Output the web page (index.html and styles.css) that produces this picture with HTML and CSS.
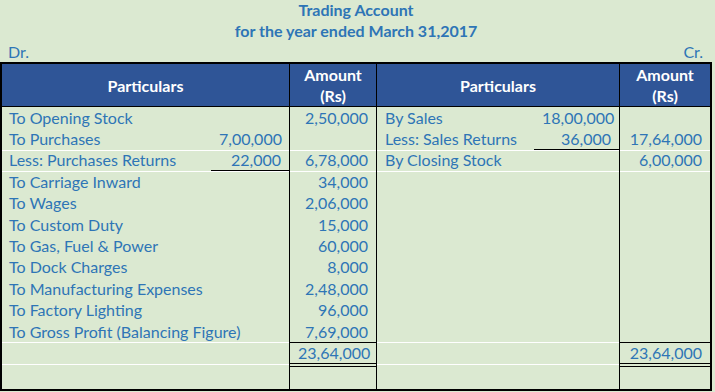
FILE: index.html
```html
<!DOCTYPE html>
<html lang="en">
<head>
<meta charset="utf-8">
<title>Trading Account</title>
<link rel="stylesheet" href="styles.css">
</head>
<body>
<div class="sheet">
  <div class="title">Trading Account</div>
  <div class="title">for the year ended March 31,2017</div>
  <div class="side-labels"><span>Dr.</span><span>Cr.</span></div>
  <table class="ledger">
    <colgroup>
      <col class="w-part">
      <col class="w-sub">
      <col class="w-amt">
      <col class="w-part2">
      <col class="w-sub2">
      <col class="w-amt2">
    </colgroup>
    <thead>
      <tr>
        <th colspan="2" class="vline">Particulars</th>
        <th class="vline">Amount<br>(Rs)</th>
        <th colspan="2" class="vline">Particulars</th>
        <th>Amount<br>(Rs)</th>
      </tr>
    </thead>
    <tbody>
      <tr>
        <td class="part">To Opening Stock</td>
        <td class="num vline"></td>
        <td class="num vline">2,50,000</td>
        <td class="part">By Sales</td>
        <td class="num vline">18,00,000</td>
        <td class="num"></td>
      </tr>
      <tr>
        <td class="part">To Purchases</td>
        <td class="num vline">7,00,000</td>
        <td class="num vline"></td>
        <td class="part">Less: Sales Returns</td>
        <td class="num vline under">36,000</td>
        <td class="num">17,64,000</td>
      </tr>
      <tr class="grid-top">
        <td class="part">Less: Purchases Returns</td>
        <td class="num vline under">22,000</td>
        <td class="num vline">6,78,000</td>
        <td class="part">By Closing Stock</td>
        <td class="num vline"></td>
        <td class="num">6,00,000</td>
      </tr>
      <tr class="grid-top">
        <td class="part">To Carriage Inward</td>
        <td class="num vline"></td>
        <td class="num vline">34,000</td>
        <td class="part"></td>
        <td class="num vline"></td>
        <td class="num"></td>
      </tr>
      <tr>
        <td class="part">To Wages</td>
        <td class="num vline"></td>
        <td class="num vline">2,06,000</td>
        <td class="part"></td>
        <td class="num vline"></td>
        <td class="num"></td>
      </tr>
      <tr>
        <td class="part">To Custom Duty</td>
        <td class="num vline"></td>
        <td class="num vline">15,000</td>
        <td class="part"></td>
        <td class="num vline"></td>
        <td class="num"></td>
      </tr>
      <tr>
        <td class="part">To Gas, Fuel &amp; Power</td>
        <td class="num vline"></td>
        <td class="num vline">60,000</td>
        <td class="part"></td>
        <td class="num vline"></td>
        <td class="num"></td>
      </tr>
      <tr>
        <td class="part">To Dock Charges</td>
        <td class="num vline"></td>
        <td class="num vline">8,000</td>
        <td class="part"></td>
        <td class="num vline"></td>
        <td class="num"></td>
      </tr>
      <tr>
        <td class="part">To Manufacturing Expenses</td>
        <td class="num vline"></td>
        <td class="num vline">2,48,000</td>
        <td class="part"></td>
        <td class="num vline"></td>
        <td class="num"></td>
      </tr>
      <tr>
        <td class="part">To Factory Lighting</td>
        <td class="num vline"></td>
        <td class="num vline">96,000</td>
        <td class="part"></td>
        <td class="num vline"></td>
        <td class="num"></td>
      </tr>
      <tr>
        <td class="part">To Gross Profit (Balancing Figure)</td>
        <td class="num vline"></td>
        <td class="num vline">7,69,000</td>
        <td class="part"></td>
        <td class="num vline"></td>
        <td class="num"></td>
      </tr>
      <tr class="grid-top total">
        <td class="part"></td>
        <td class="num vline"></td>
        <td class="num vline sum">23,64,000</td>
        <td class="part"></td>
        <td class="num vline"></td>
        <td class="num sum">23,64,000</td>
      </tr>
      <tr class="grid-top last">
        <td class="part"></td>
        <td class="num vline"></td>
        <td class="num vline sum-end"></td>
        <td class="part"></td>
        <td class="num vline"></td>
        <td class="num sum-end"></td>
      </tr>
    </tbody>
  </table>
</div>
</body>
</html>
```

FILE: styles.css
```css
* {
  box-sizing: border-box;
}

body {
  margin: 0;
  background: #dbe9d1;
  color: #2e75b6;
  font-family: Lato, "Liberation Sans", sans-serif;
}

.sheet {
  width: 712px;
}

.title {
  height: 20.5px;
  line-height: 20.5px;
  text-align: center;
  font-weight: 700;
  font-size: 16px;
}

.side-labels {
  height: 21px;
  display: flex;
  justify-content: space-between;
  align-items: center;
  padding: 0 9px 0 8px;
  font-size: 16px;
}

.ledger {
  width: 712px;
  table-layout: fixed;
  border-collapse: separate;
  border-spacing: 0;
  border: 2px solid #000;
  font-size: 16px;
}

.w-part { width: 209px; }
.w-sub { width: 79px; }
.w-amt { width: 87px; }
.w-part2 { width: 157px; }
.w-sub2 { width: 86px; }
.w-amt2 { width: 90px; }

.ledger th {
  height: 43px;
  padding: 0 4px;
  background: #2f5597;
  color: #fff;
  font-weight: 700;
  line-height: 21px;
  text-align: center;
  vertical-align: middle;
  border-bottom: 1px solid #000;
}

.ledger td {
  height: 21.4px;
  padding: 0 8px;
  white-space: nowrap;
  vertical-align: middle;
  line-height: 18px;
}

.ledger td.part:first-child {
  padding-left: 7px;
}

.ledger .vline {
  border-right: 1px solid #000;
}

.ledger .num {
  text-align: right;
}

.ledger .under {
  box-shadow: inset 0 -1px 0 #000;
}

.ledger .grid-top td {
  box-shadow: inset 0 1px 0 #fff;
}

.ledger .grid-top td.under {
  box-shadow: inset 0 1px 0 #fff, inset 0 -1px 0 #000;
}

.ledger .total td.sum {
  box-shadow: inset 0 1px 0 #000, inset 0 -1px 0 #000;
}

.ledger .last td.sum-end {
  box-shadow: inset 0 2px 0 #dbe9d1, inset 0 3px 0 #000;
}

.ledger .last td {
  height: 25.2px;
}
```
